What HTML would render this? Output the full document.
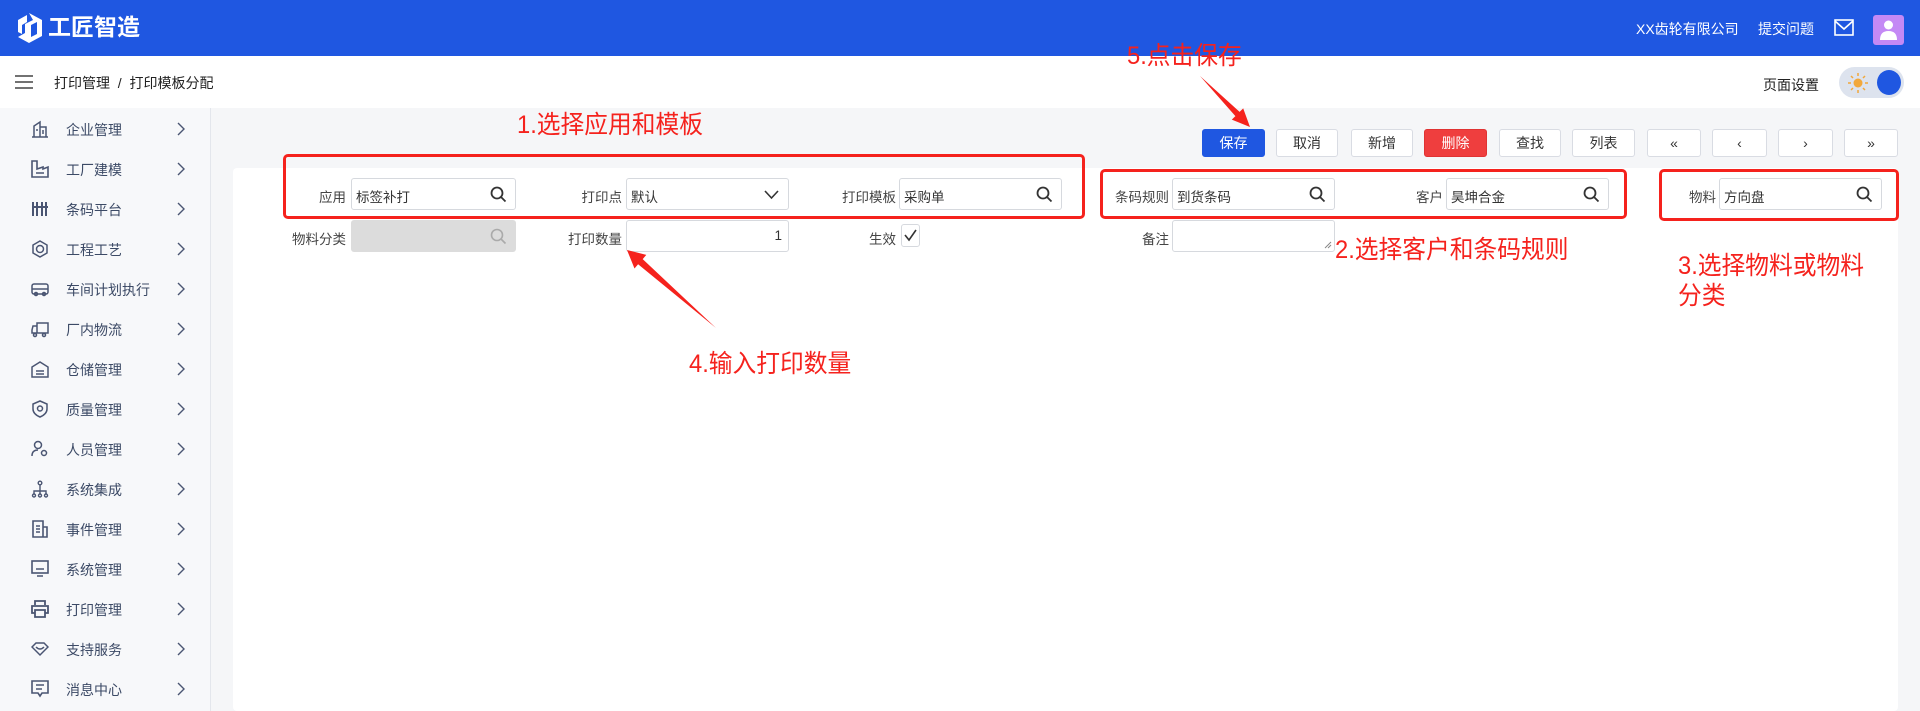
<!DOCTYPE html>
<html><head><meta charset="utf-8"><style>
*{box-sizing:border-box;margin:0;padding:0}
body{width:1920px;height:711px;overflow:hidden;background:#f5f6f8;font-family:"Liberation Sans","Noto Sans CJK SC",sans-serif;font-size:14px;color:#333;position:relative}
.abs{position:absolute}
.hdr{left:0;top:0;width:1920px;height:56px;background:#1f57e1}
.bc{left:0;top:56px;width:1920px;height:52px;background:#fff}
.side{left:0;top:108px;width:211px;height:603px;background:#f7f8fa;border-right:1px solid #e3e6ec}
.mi{position:absolute;left:0;width:211px;height:40px;color:#3c4a66;font-size:14px}
.mi span{position:absolute;left:66px;top:11px}
.mi svg.ic{position:absolute;left:31px;top:11px}
.mi svg.ch{position:absolute;left:176px;top:13px}
.card{left:233px;top:168px;width:1665px;height:543px;background:#fff;border-radius:4px}
.btn{position:absolute;top:129px;height:28px;border:1px solid #d9dce3;border-radius:3px;background:#fff;text-align:center;line-height:26px;font-size:14px;color:#333}
.lbl{position:absolute;font-size:13.5px;color:#444;text-align:right}
.inp{position:absolute;height:32px;border:1px solid #d6d9de;border-radius:3px;background:#fff;font-size:13.5px;padding:7px 4px;color:#333}
.inp svg{position:absolute;right:8px;top:7px}
.red{position:absolute;border:3px solid #f5221d;border-radius:5px}
.rt{position:absolute;color:#f5221d;font-size:25px;line-height:30px;white-space:nowrap;transform:scaleX(0.95);transform-origin:left}
</style></head><body>
<div class="abs hdr"></div>
<svg class="abs" style="left:15px;top:12px" width="30" height="32" viewBox="0 0 30 32"><path d="M14 1 L27 8 L27 24 L14 31 L3 25 L10 21 L10 12 L18 8 Z" fill="#fff"/><path d="M3 8 L12 3 L12 10 L7 13 L7 22 L3 20 Z" fill="#fff"/><path d="M16 13 L22 10 L22 22 L16 25 Z" fill="#1f57e1"/></svg>
<div class="abs" style="left:48px;top:12px;color:#fff;font-size:23px;font-weight:bold;line-height:30px">工匠智造</div>
<div class="abs" style="left:1636px;top:19px;color:#fff;font-size:14px">XX齿轮有限公司</div>
<div class="abs" style="left:1758px;top:19px;color:#fff;font-size:14px">提交问题</div>
<svg class="abs" style="left:1834px;top:19px" width="20" height="17" viewBox="0 0 20 17"><rect x="1" y="1" width="18" height="15" fill="none" stroke="#fff" stroke-width="1.6"/><path d="M1 2 L10 10 L19 2" fill="none" stroke="#fff" stroke-width="1.6"/></svg>
<div class="abs" style="left:1873px;top:15px;width:31px;height:30px;background:#c489f5;border-radius:3px"></div>
<svg class="abs" style="left:1879px;top:19px" width="19" height="22" viewBox="0 0 19 22"><circle cx="9.5" cy="6" r="4.5" fill="#fff"/><path d="M1 21 Q1 12 9.5 12 Q18 12 18 21 Z" fill="#fff"/></svg>

<div class="abs bc"></div>
<svg class="abs" style="left:15px;top:75px" width="18" height="14"><path d="M0 1H18M0 7H18M0 13H18" stroke="#444" stroke-width="1.6"/></svg>
<div class="abs" style="left:54px;top:73px;font-size:14px;color:#222">打印管理 &nbsp;/&nbsp; 打印模板分配</div>
<div class="abs" style="left:1763px;top:75px;font-size:14px;color:#222">页面设置</div>
<div class="abs" style="left:1839px;top:67px;width:65px;height:31px;background:#dde3ee;border-radius:16px"></div>
<svg class="abs" style="left:1848px;top:73px" width="20" height="20" viewBox="0 0 20 20"><circle cx="10" cy="10" r="4.5" fill="#f2a83b"/><g stroke="#f2a83b" stroke-width="1.5"><path d="M10 0v3M10 17v3M0 10h3M17 10h3M3 3l2 2M15 15l2 2M3 17l2-2M15 5l2-2"/></g></svg>
<div class="abs" style="left:1877px;top:70px;width:24px;height:25px;background:#1f57e1;border-radius:50%"></div>

<div class="abs side">
<div class="mi" style="top:1px"><svg class="ic" width="18" height="18" viewBox="0 0 18 18" fill="none" stroke="#4a5572" stroke-width="1.5"><path d="M1 17H17M3 17V6L9 2V17M9 7H15V17M6 9v2M12 10v4"/></svg><span>企业管理</span><svg class="ch" width="10" height="14"><path d="M2 1L8 7L2 13" fill="none" stroke="#4a5572" stroke-width="1.4"/></svg></div>
<div class="mi" style="top:41px"><svg class="ic" width="18" height="18" viewBox="0 0 18 18" fill="none" stroke="#4a5572" stroke-width="1.6"><path d="M1 1V17H17V7L12 9V7L6 9V1Z M5 13h8"/></svg><span>工厂建模</span><svg class="ch" width="10" height="14"><path d="M2 1L8 7L2 13" fill="none" stroke="#4a5572" stroke-width="1.4"/></svg></div>
<div class="mi" style="top:81px"><svg class="ic" width="18" height="18" viewBox="0 0 18 18" fill="none" stroke="#4a5572" stroke-width="2"><path d="M2 2v14M6 2v14M11 2v14M15 2v14M1 7h16" /></svg><span>条码平台</span><svg class="ch" width="10" height="14"><path d="M2 1L8 7L2 13" fill="none" stroke="#4a5572" stroke-width="1.4"/></svg></div>
<div class="mi" style="top:121px"><svg class="ic" width="18" height="18" viewBox="0 0 18 18" fill="none" stroke="#4a5572" stroke-width="1.5"><path d="M9 1L16 5V13L9 17L2 13V5Z"/><circle cx="9" cy="9" r="3.5"/></svg><span>工程工艺</span><svg class="ch" width="10" height="14"><path d="M2 1L8 7L2 13" fill="none" stroke="#4a5572" stroke-width="1.4"/></svg></div>
<div class="mi" style="top:161px"><svg class="ic" width="18" height="18" viewBox="0 0 18 18" fill="none" stroke="#4a5572" stroke-width="1.5"><rect x="1" y="4" width="16" height="10" rx="2"/><path d="M1 9h16"/><circle cx="5" cy="14" r="1.5"/><circle cx="13" cy="14" r="1.5"/></svg><span>车间计划执行</span><svg class="ch" width="10" height="14"><path d="M2 1L8 7L2 13" fill="none" stroke="#4a5572" stroke-width="1.4"/></svg></div>
<div class="mi" style="top:201px"><svg class="ic" width="18" height="18" viewBox="0 0 18 18" fill="none" stroke="#4a5572" stroke-width="1.5"><path d="M6 3H17V13H6ZM6 6H2L1 10V13H6"/><circle cx="4" cy="15" r="1.5"/><circle cx="13" cy="15" r="1.5"/></svg><span>厂内物流</span><svg class="ch" width="10" height="14"><path d="M2 1L8 7L2 13" fill="none" stroke="#4a5572" stroke-width="1.4"/></svg></div>
<div class="mi" style="top:241px"><svg class="ic" width="18" height="18" viewBox="0 0 18 18" fill="none" stroke="#4a5572" stroke-width="1.5"><path d="M1 7L9 2L17 7V17H1Z M5 11h8M5 14h8"/></svg><span>仓储管理</span><svg class="ch" width="10" height="14"><path d="M2 1L8 7L2 13" fill="none" stroke="#4a5572" stroke-width="1.4"/></svg></div>
<div class="mi" style="top:281px"><svg class="ic" width="18" height="18" viewBox="0 0 18 18" fill="none" stroke="#4a5572" stroke-width="1.5"><path d="M9 1L16 4V9Q16 14 9 17Q2 14 2 9V4Z"/><circle cx="9" cy="8.5" r="2.5"/></svg><span>质量管理</span><svg class="ch" width="10" height="14"><path d="M2 1L8 7L2 13" fill="none" stroke="#4a5572" stroke-width="1.4"/></svg></div>
<div class="mi" style="top:321px"><svg class="ic" width="18" height="18" viewBox="0 0 18 18" fill="none" stroke="#4a5572" stroke-width="1.5"><circle cx="7" cy="5" r="3.5"/><path d="M1 16Q1 10 7 10"/><circle cx="13" cy="13" r="2.5"/></svg><span>人员管理</span><svg class="ch" width="10" height="14"><path d="M2 1L8 7L2 13" fill="none" stroke="#4a5572" stroke-width="1.4"/></svg></div>
<div class="mi" style="top:361px"><svg class="ic" width="18" height="18" viewBox="0 0 18 18" fill="none" stroke="#4a5572" stroke-width="1.4"><circle cx="9" cy="3" r="1.8"/><path d="M9 5V9M3 14V11H15V14M9 9V14"/><circle cx="3" cy="15.5" r="1.5"/><circle cx="9" cy="15.5" r="1.5"/><circle cx="15" cy="15.5" r="1.5"/></svg><span>系统集成</span><svg class="ch" width="10" height="14"><path d="M2 1L8 7L2 13" fill="none" stroke="#4a5572" stroke-width="1.4"/></svg></div>
<div class="mi" style="top:401px"><svg class="ic" width="18" height="18" viewBox="0 0 18 18" fill="none" stroke="#4a5572" stroke-width="1.6"><path d="M2 1H12V17H2ZM12 7H16V17H12M5 6h4M5 9h4M5 12h4"/></svg><span>事件管理</span><svg class="ch" width="10" height="14"><path d="M2 1L8 7L2 13" fill="none" stroke="#4a5572" stroke-width="1.4"/></svg></div>
<div class="mi" style="top:441px"><svg class="ic" width="18" height="18" viewBox="0 0 18 18" fill="none" stroke="#4a5572" stroke-width="1.6"><rect x="1" y="1" width="16" height="12"/><path d="M5 9h8M6 16h6"/></svg><span>系统管理</span><svg class="ch" width="10" height="14"><path d="M2 1L8 7L2 13" fill="none" stroke="#4a5572" stroke-width="1.4"/></svg></div>
<div class="mi" style="top:481px"><svg class="ic" width="18" height="18" viewBox="0 0 18 18" fill="none" stroke="#4a5572" stroke-width="1.8"><path d="M4 5V1H14V5M4 13H1V6H17V13H14M4 10H14V17H4Z"/></svg><span>打印管理</span><svg class="ch" width="10" height="14"><path d="M2 1L8 7L2 13" fill="none" stroke="#4a5572" stroke-width="1.4"/></svg></div>
<div class="mi" style="top:521px"><svg class="ic" width="18" height="18" viewBox="0 0 18 18" fill="none" stroke="#4a5572" stroke-width="1.5"><path d="M1 7L5 3H13L17 7L9 15Z M5 7Q9 11 13 7"/></svg><span>支持服务</span><svg class="ch" width="10" height="14"><path d="M2 1L8 7L2 13" fill="none" stroke="#4a5572" stroke-width="1.4"/></svg></div>
<div class="mi" style="top:561px"><svg class="ic" width="18" height="18" viewBox="0 0 18 18" fill="none" stroke="#4a5572" stroke-width="1.6"><path d="M1 1H17V13H11L9 16L7 13H1Z M5 5h8M5 9h6"/></svg><span>消息中心</span><svg class="ch" width="10" height="14"><path d="M2 1L8 7L2 13" fill="none" stroke="#4a5572" stroke-width="1.4"/></svg></div>
</div>

<div class="abs card"></div>

<div class="btn" style="left:1202px;width:63px;background:#1f57e1;border-color:#1f57e1;color:#fff">保存</div>
<div class="btn" style="left:1276px;width:62px">取消</div>
<div class="btn" style="left:1351px;width:62px">新增</div>
<div class="btn" style="left:1424px;width:63px;background:#ef3e3e;border-color:#e03333;color:#fff">删除</div>
<div class="btn" style="left:1499px;width:62px">查找</div>
<div class="btn" style="left:1572px;width:63px">列表</div>
<div class="btn" style="left:1647px;width:54px">«</div>
<div class="btn" style="left:1712px;width:55px">‹</div>
<div class="btn" style="left:1778px;width:55px">›</div>
<div class="btn" style="left:1844px;width:54px">»</div>

<div class="lbl" style="left:290px;width:56px;top:186px">应用</div>
<div class="inp" style="left:351px;top:178px;width:165px">标签补打<svg width="17" height="17" viewBox="0 0 17 17"><circle cx="7" cy="7" r="5.5" fill="none" stroke="#333" stroke-width="1.8"/><path d="M11 11L15.5 15.5" stroke="#333" stroke-width="1.8"/></svg></div>
<div class="lbl" style="left:540px;width:82px;top:186px">打印点</div>
<div class="inp" style="left:626px;top:178px;width:163px">默认<svg width="17" height="17" viewBox="0 0 17 17"><path d="M2 5L8.5 12L15 5" fill="none" stroke="#333" stroke-width="1.6"/></svg></div>
<div class="lbl" style="left:800px;width:96px;top:186px">打印模板</div>
<div class="inp" style="left:899px;top:178px;width:163px">采购单<svg width="17" height="17" viewBox="0 0 17 17"><circle cx="7" cy="7" r="5.5" fill="none" stroke="#333" stroke-width="1.8"/><path d="M11 11L15.5 15.5" stroke="#333" stroke-width="1.8"/></svg></div>
<div class="lbl" style="left:1100px;width:69px;top:186px">条码规则</div>
<div class="inp" style="left:1172px;top:178px;width:163px">到货条码<svg width="17" height="17" viewBox="0 0 17 17"><circle cx="7" cy="7" r="5.5" fill="none" stroke="#333" stroke-width="1.8"/><path d="M11 11L15.5 15.5" stroke="#333" stroke-width="1.8"/></svg></div>
<div class="lbl" style="left:1380px;width:63px;top:186px">客户</div>
<div class="inp" style="left:1446px;top:178px;width:163px">昊坤合金<svg width="17" height="17" viewBox="0 0 17 17"><circle cx="7" cy="7" r="5.5" fill="none" stroke="#333" stroke-width="1.8"/><path d="M11 11L15.5 15.5" stroke="#333" stroke-width="1.8"/></svg></div>
<div class="lbl" style="left:1660px;width:56px;top:186px">物料</div>
<div class="inp" style="left:1719px;top:178px;width:163px">方向盘<svg width="17" height="17" viewBox="0 0 17 17"><circle cx="7" cy="7" r="5.5" fill="none" stroke="#333" stroke-width="1.8"/><path d="M11 11L15.5 15.5" stroke="#333" stroke-width="1.8"/></svg></div>

<div class="lbl" style="left:270px;width:76px;top:228px">物料分类</div>
<div class="inp" style="left:351px;top:220px;width:165px;background:#dcdcdc;border-color:#dcdcdc"><svg width="17" height="17" viewBox="0 0 17 17"><circle cx="7" cy="7" r="5.5" fill="none" stroke="#aaa" stroke-width="1.6"/><path d="M11 11L15.5 15.5" stroke="#aaa" stroke-width="1.6"/></svg></div>
<div class="lbl" style="left:540px;width:82px;top:228px">打印数量</div>
<div class="inp" style="left:626px;top:220px;width:163px;text-align:right;padding-right:6px">1</div>
<div class="lbl" style="left:840px;width:56px;top:228px">生效</div>
<div class="abs" style="left:901px;top:224px;width:19px;height:23px;border:1px solid #d6d9de;border-radius:3px;background:#fff"></div>
<svg class="abs" style="left:903px;top:228px" width="15" height="15"><path d="M2 7L6 12L13 2" fill="none" stroke="#333" stroke-width="1.6"/></svg>
<div class="lbl" style="left:1100px;width:69px;top:228px">备注</div>
<div class="inp" style="left:1172px;top:220px;width:163px"><svg width="8" height="8" style="right:2px;top:20px"><path d="M1 7L7 1M4 7L7 4" stroke="#888"/></svg></div>

<div class="red" style="left:283px;top:154px;width:802px;height:65px"></div>
<div class="red" style="left:1100px;top:169px;width:527px;height:50px"></div>
<div class="red" style="left:1659px;top:169px;width:240px;height:52px"></div>
<div class="rt" style="left:517px;top:110px">1.选择应用和模板</div>
<div class="rt" style="left:1127px;top:41px">5.点击保存</div>
<div class="rt" style="left:1335px;top:235px">2.选择客户和条码规则</div>
<div class="rt" style="left:1678px;top:251px">3.选择物料或物料<br>分类</div>
<div class="rt" style="left:689px;top:349px">4.输入打印数量</div>
<svg class="abs" style="left:0;top:0" width="1920" height="711">
<polygon points="1200,76 1239.6,111.9 1243.2,108.4 1250,127 1231.8,119.6 1235.4,116.1" fill="#f5221d"/>
<polygon points="716,328 642.7,259.1 646.3,254.9 627,250 634.5,268.5 638.1,264.3" fill="#f5221d"/>
</svg>
</body></html>
